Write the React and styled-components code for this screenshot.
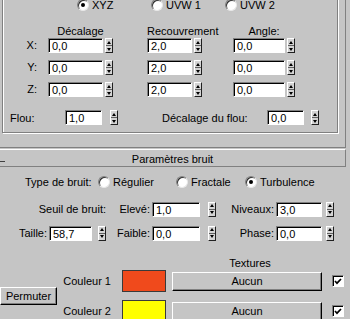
import React from 'react';
import styled, { createGlobalStyle } from 'styled-components';

const GlobalStyle = createGlobalStyle`
  html, body {
    margin: 0;
    padding: 0;
    background: #c5c5c5;
  }
  body {
    font-family: "Liberation Sans", Arial, sans-serif;
    font-size: 11px;
    color: #000;
  }
`;

const Panel = styled.div`
  width: 350px;
  height: 319px;
  overflow: hidden;
  background: #c5c5c5;
`;

const TopRollout = styled.div`
  width: 343px;
  height: 147px;
  padding-left: 2px;
  border-right: 1px solid #808080;
  border-bottom: 1px solid #808080;
  overflow: hidden;
`;

const GroupBox = styled.div`
  margin-top: -8px;
  width: 336px;
  height: 141px;
  box-sizing: border-box;
  border: 1px solid #808080;
  box-shadow: inset 1px 1px 0 #fff, 1px 1px 0 #fff;
  padding-top: 5px;
`;

const RadioRow = styled.div`
  display: flex;
  height: 14px;
  padding-left: 74px;
`;

const RadioItem = styled.label`
  display: flex;
  align-items: center;
  width: ${p => p.$w || 74}px;
  height: 14px;
  white-space: nowrap;
`;

const RadioDot = styled.span`
  display: flex;
  align-items: center;
  justify-content: center;
  width: 12px;
  height: 12px;
  box-sizing: border-box;
  border-radius: 50%;
  background: #fff;
  border: 1px solid;
  border-color: #808080 #e8e8e8 #e8e8e8 #808080;
  box-shadow: inset 1px 1px 0 #303030;
  margin-right: 3px;
  flex: none;
  &::after {
    content: '';
    width: 4px;
    height: 4px;
    border-radius: 50%;
    background: ${p => (p.$on ? '#000' : 'transparent')};
  }
`;

const HeaderRow = styled.div`
  display: grid;
  grid-template-columns: 45px 99px 86px auto;
  margin-top: 13px;
  height: 13px;
  line-height: 13px;
`;

const ColHeader = styled.div`
  grid-column: ${p => p.$col};
  width: ${p => p.$w}px;
  text-align: center;
  white-space: nowrap;
`;

const FieldGrid = styled.div`
  display: grid;
  grid-template-columns: 45px 99px 86px auto;
  grid-auto-rows: 15px;
  row-gap: 7px;
`;

const AxisLabel = styled.div`
  text-align: right;
  padding-right: 11px;
  line-height: 15px;
`;

const Cell = styled.div`
  display: flex;
  align-items: center;
  gap: ${p => p.$gap ?? 2}px;
`;

const Input = styled.div`
  width: ${p => p.$w}px;
  height: 15px;
  box-sizing: border-box;
  background: #fff;
  border: 1px solid;
  border-color: #808080 #fff #fff #808080;
  box-shadow: inset 1px 1px 0 #000;
  padding-left: 3px;
  line-height: 14px;
  flex: none;
`;

const SpinBox = styled.div`
  display: flex;
  flex-direction: column;
  width: 8px;
  height: 15px;
  box-sizing: border-box;
  border: 1px solid;
  border-color: #fff #202020 #202020 #fff;
  background: #d4d4d4;
  flex: none;
`;

const SpinHalf = styled.div`
  flex: 1;
  display: flex;
  align-items: center;
  justify-content: center;
  & + & {
    border-top: 1px solid #606060;
  }
  &::after {
    content: '';
    border-left: 2px solid transparent;
    border-right: 2px solid transparent;
    ${p => (p.$down ? 'border-top: 3px solid #000;' : 'border-bottom: 3px solid #000;')}
  }
`;

const BlurRow = styled.div`
  display: flex;
  align-items: center;
  height: 15px;
  margin-top: 13px;
  padding-left: 7px;
`;

const RowLabel = styled.div`
  width: ${p => p.$w}px;
  margin-left: ${p => p.$ml || 0}px;
  white-space: nowrap;
  flex: none;
`;

const RolloutHeader = styled.div`
  position: relative;
  margin-top: 1px;
  width: 345px;
  height: 16px;
  line-height: 19px;
  border-top: 1px solid #fff;
  border-bottom: 1px solid #808080;
  border-right: 1px solid #808080;
  text-align: center;
  &::before {
    content: '';
    position: absolute;
    left: 0;
    top: 11px;
    width: 5px;
    height: 1px;
    background: #404040;
  }
`;

const TypeRow = styled.div`
  display: flex;
  align-items: center;
  height: 14px;
  margin-top: 8px;
  padding-left: 25px;
`;

const ParamGrid = styled.div`
  display: grid;
  grid-template-columns: 106px 110px 118px;
  grid-template-rows: 14px 14px;
  row-gap: 10px;
  margin-top: 13px;
`;

const ParamField = styled.div`
  justify-self: end;
  display: flex;
  align-items: center;
  height: 14px;
  white-space: nowrap;
`;

const ParamLabel = styled.span`
  margin-right: 2px;
`;

const TexturesLabel = styled.div`
  margin: 17px 0 0 175px;
  width: 150px;
  height: 13px;
  line-height: 12px;
  text-align: center;
`;

const ColorGrid = styled.div`
  display: grid;
  grid-template-columns: 60px 62px 50px 160px 12px;
  grid-template-rows: 22px 22px;
  row-gap: 8px;
  align-items: center;
`;

const RaisedButton = styled.div`
  box-sizing: border-box;
  height: ${p => p.$h || 19}px;
  width: ${p => p.$w}px;
  border: 1px solid;
  border-color: #fff #000 #000 #fff;
  box-shadow: inset -1px -1px 0 #808080;
  text-align: center;
  line-height: ${p => (p.$h || 19) - 2}px;
  white-space: nowrap;
`;

const SwapButton = styled(RaisedButton)`
  grid-column: 1;
  grid-row: 1 / span 2;
`;

const ColorLabel = styled.div`
  grid-column: 2;
  justify-self: end;
  padding-right: 11px;
  white-space: nowrap;
`;

const Swatch = styled.div`
  grid-column: 3;
  width: 44px;
  height: 22px;
  box-sizing: border-box;
  border: 1px solid #3a3a3a;
  background: ${p => p.$color};
`;

const CheckBox = styled.div`
  display: flex;
  align-items: center;
  justify-content: center;
  width: 12px;
  height: 12px;
  box-sizing: border-box;
  background: #fff;
  border: 1px solid;
  border-color: #808080 #fff #fff #808080;
  box-shadow: inset 1px 1px 0 #000;
`;

const Spinner = () => (
  <SpinBox>
    <SpinHalf />
    <SpinHalf $down />
  </SpinBox>
);

const Radio = ({ on, w, children }) => (
  <RadioItem $w={w}>
    <RadioDot $on={on} />
    {children}
  </RadioItem>
);

const Check = () => (
  <CheckBox>
    <svg width="8" height="7" viewBox="0 0 8 7">
      <polyline points="1,3 3,5.2 7,1" fill="none" stroke="#000" strokeWidth="1.7" />
    </svg>
  </CheckBox>
);

const axes = [
  { name: 'X:', values: ['0,0', '2,0', '0,0'] },
  { name: 'Y:', values: ['0,0', '2,0', '0,0'] },
  { name: 'Z:', values: ['0,0', '2,0', '0,0'] },
];
const colWidths = [55, 45, 52];

const Field = ({ label, value, w, gap }) => (
  <ParamField>
    <ParamLabel>{label}</ParamLabel>
    <Cell $gap={gap}>
      <Input $w={w}>{value}</Input>
      <Spinner />
    </Cell>
  </ParamField>
);

export default function App() {
  return (
    <Panel>
      <GlobalStyle />
      <TopRollout>
        <GroupBox>
          <RadioRow>
            <Radio on>XYZ</Radio>
            <Radio>UVW 1</Radio>
            <Radio>UVW 2</Radio>
          </RadioRow>
          <HeaderRow>
            <ColHeader $col={2} $w={65}>Décalage</ColHeader>
            <ColHeader $col={3} $w={55}>Recouvrement</ColHeader>
            <ColHeader $col={4} $w={62}>Angle:</ColHeader>
          </HeaderRow>
          <FieldGrid>
            {axes.map(a => (
              <React.Fragment key={a.name}>
                <AxisLabel>{a.name}</AxisLabel>
                {a.values.map((v, i) => (
                  <Cell key={i}>
                    <Input $w={colWidths[i]}>{v}</Input>
                    <Spinner />
                  </Cell>
                ))}
              </React.Fragment>
            ))}
          </FieldGrid>
          <BlurRow>
            <RowLabel $w={55}>Flou:</RowLabel>
            <Cell $gap={8}>
              <Input $w={37}>1,0</Input>
              <Spinner />
            </Cell>
            <RowLabel $w={105} $ml={44}>Décalage du flou:</RowLabel>
            <Cell $gap={7}>
              <Input $w={37}>0,0</Input>
              <Spinner />
            </Cell>
          </BlurRow>
        </GroupBox>
      </TopRollout>

      <RolloutHeader>Paramètres bruit</RolloutHeader>

      <TypeRow>
        <RowLabel $w={73}>Type de bruit:</RowLabel>
        <Radio w={78}>Régulier</Radio>
        <Radio w={69}>Fractale</Radio>
        <Radio on w={80}>Turbulence</Radio>
      </TypeRow>

      <ParamGrid>
        <ParamField>Seuil de bruit:</ParamField>
        <Field label="Elevé:" value="1,0" w={48} gap={8} />
        <Field label="Niveaux:" value="3,0" w={46} gap={4} />
        <Field label="Taille:" value="58,7" w={43} gap={6} />
        <Field label="Faible:" value="0,0" w={48} gap={8} />
        <Field label="Phase:" value="0,0" w={46} gap={4} />
      </ParamGrid>

      <TexturesLabel>Textures</TexturesLabel>
      <ColorGrid>
        <SwapButton $w={57} $h={18}>Permuter</SwapButton>
        <ColorLabel>Couleur 1</ColorLabel>
        <Swatch $color="#f04a1c" />
        <RaisedButton $w={150}>Aucun</RaisedButton>
        <Check />
        <ColorLabel>Couleur 2</ColorLabel>
        <Swatch $color="#ffff00" />
        <RaisedButton $w={150}>Aucun</RaisedButton>
        <Check />
      </ColorGrid>
    </Panel>
  );
}
